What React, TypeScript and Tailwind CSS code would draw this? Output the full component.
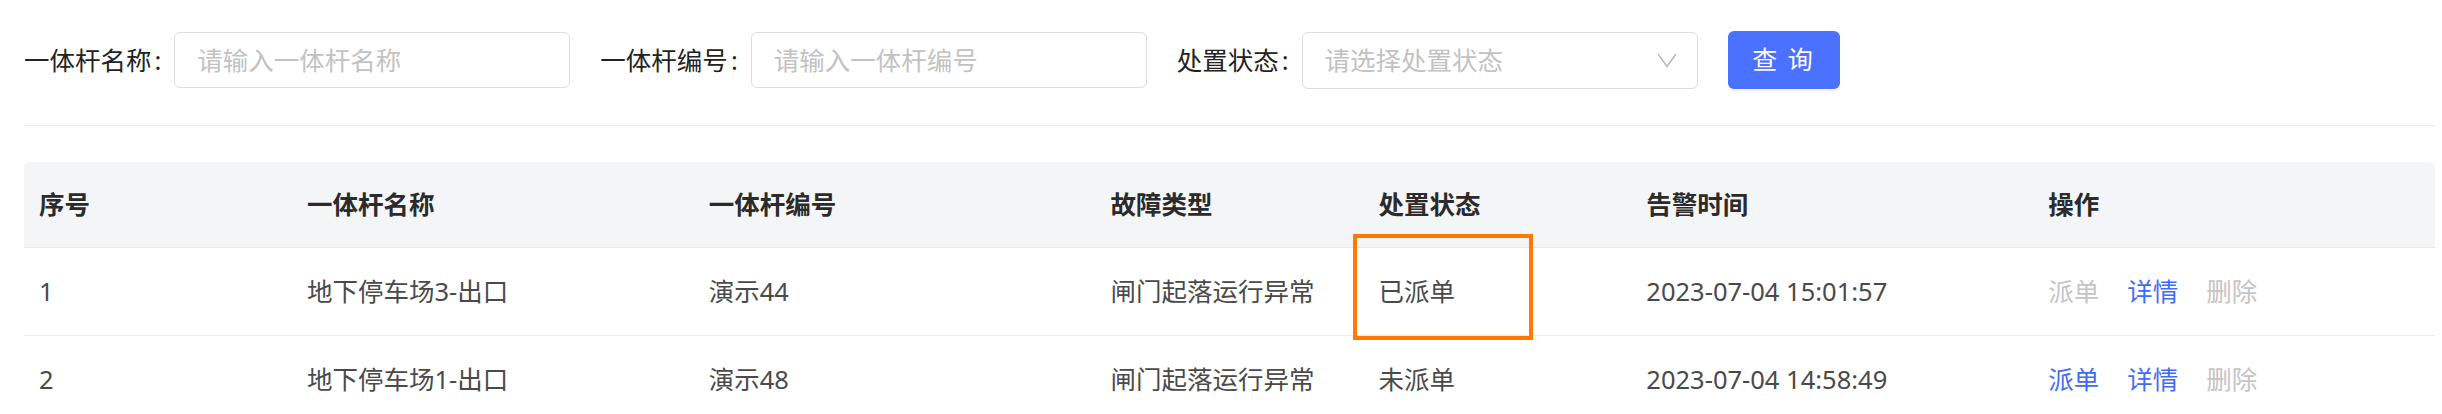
type Row = {
  no: number;
  name: string;
  code: string;
  fault: string;
  status: string;
  time: string;
  canDispatch: boolean;
};

const rows: Row[] = [
  { no: 1, name: '地下停车场3-出口', code: '演示44', fault: '闸门起落运行异常', status: '已派单', time: '2023-07-04 15:01:57', canDispatch: false },
  { no: 2, name: '地下停车场1-出口', code: '演示48', fault: '闸门起落运行异常', status: '未派单', time: '2023-07-04 14:58:49', canDispatch: true },
];

const cols = ['序号', '一体杆名称', '一体杆编号', '故障类型', '处置状态', '告警时间', '操作'];

function Field({ label, placeholder, select }: { label: string; placeholder: string; select?: boolean }) {
  return (
    <div className="flex items-center">
      <span className="text-[25.5px] text-[#222] whitespace-nowrap">
        {label}
        <span className="ml-[3px]">:</span>
      </span>
      <div
        className={`ml-[13px] w-[396px] rounded-[6px] border border-[#dcdcdc] bg-white flex items-center justify-between pl-[22px] pr-[20px] ${select ? 'h-[57px]' : 'h-[56px]'}`}
      >
        <span className="text-[25.5px] text-[#c2c2c2]">{placeholder}</span>
        {select && (
          <svg width="20" height="15" viewBox="0 0 20 15" fill="none" stroke="#b8b8b8" strokeWidth="1.5">
            <polyline points="1,1 10,13.5 19,1" />
          </svg>
        )}
      </div>
    </div>
  );
}

export default function App() {
  return (
    <div
      className="relative bg-white w-[2442px] h-[414px] overflow-hidden pl-[24px] pr-[7px] pt-[31px]"
      style={{ fontFamily: '"Noto Sans", "Noto Sans CJK SC", sans-serif' }}
    >
      {/* Filter bar */}
      <div className="flex items-center gap-[30px] h-[58px]">
        <Field label="一体杆名称" placeholder="请输入一体杆名称" />
        <Field label="一体杆编号" placeholder="请输入一体杆编号" />
        <Field label="处置状态" placeholder="请选择处置状态" select />
        <button className="h-[58px] w-[112px] rounded-[6px] bg-[#4a71ff] text-white text-[25px] tracking-[2px] shadow-[0_3px_0_rgba(0,0,0,0.04)]">
          查 询
        </button>
      </div>

      <div className="mt-[36px] border-t border-[#ebebeb]" />

      {/* Table */}
      <div className="mt-[36px]">
        <div className="grid grid-cols-[2fr_3fr_3fr_2fr_2fr_3fr_3fr] h-[86px] bg-[#f4f5f7] rounded-t-[6px] border-b border-[#e8e8e8]">
          {cols.map(c => (
            <div key={c} className="flex items-center pl-[15px] text-[25.5px] font-bold text-[#2b2b2b]">
              {c}
            </div>
          ))}
        </div>
        {rows.map(r => (
          <div key={r.no} className="grid grid-cols-[2fr_3fr_3fr_2fr_2fr_3fr_3fr] h-[88px] border-b border-[#ebebeb] text-[25.5px] text-[#4a4a4a]">
            <div className="flex items-center pl-[15px]">{r.no}</div>
            <div className="flex items-center pl-[15px]">{r.name}</div>
            <div className="flex items-center pl-[15px]">{r.code}</div>
            <div className="flex items-center pl-[15px]">{r.fault}</div>
            <div className="flex items-center pl-[15px]">{r.status}</div>
            <div className="flex items-center pl-[15px]">{r.time}</div>
            <div className="flex items-center pl-[15px] gap-[28px]">
              <span className={r.canDispatch ? 'text-[#3f6cf7]' : 'text-[#c4c4c4]'}>派单</span>
              <span className="text-[#3f6cf7]">详情</span>
              <span className="text-[#c4c4c4]">删除</span>
            </div>
          </div>
        ))}
      </div>

      {/* Annotation highlight */}
      <div className="absolute left-[1353px] top-[234px] w-[180px] h-[106px] border-[4px] border-[#ff7800]" />
    </div>
  );
}
